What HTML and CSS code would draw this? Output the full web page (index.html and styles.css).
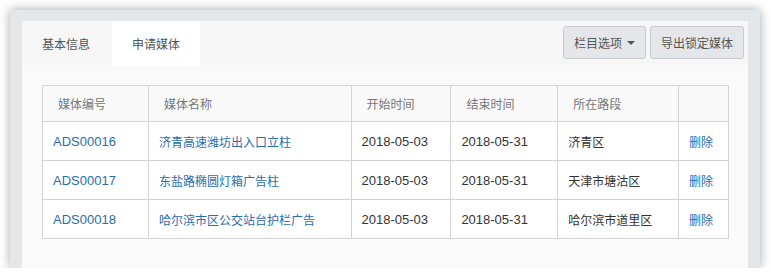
FILE: index.html
```html
<!DOCTYPE html>
<html lang="zh">
<head>
<meta charset="utf-8">
<link rel="stylesheet" href="styles.css">
</head>
<body>
<div class="frame">
  <div class="panel">
    <div class="panel-head">
      <div class="tabs">
        <div class="tab">基本信息</div>
        <div class="tab active">申请媒体</div>
      </div>
      <div class="actions">
        <button class="btn">栏目选项 <span class="caret"></span></button>
        <button class="btn">导出锁定媒体</button>
      </div>
    </div>
    <div class="panel-body">
      <table class="grid">
        <colgroup>
          <col class="c1"><col class="c2"><col class="c3"><col class="c4"><col class="c5"><col class="c6">
        </colgroup>
        <thead>
          <tr><th>媒体编号</th><th>媒体名称</th><th>开始时间</th><th>结束时间</th><th>所在路段</th><th></th></tr>
        </thead>
        <tbody>
          <tr><td class="num link">ADS00016</td><td class="link">济青高速潍坊出入口立柱</td><td class="num">2018-05-03</td><td class="num">2018-05-31</td><td>济青区</td><td class="link">删除</td></tr>
          <tr><td class="num link">ADS00017</td><td class="link">东盐路椭圆灯箱广告柱</td><td class="num">2018-05-03</td><td class="num">2018-05-31</td><td>天津市塘沽区</td><td class="link">删除</td></tr>
          <tr><td class="num link">ADS00018</td><td class="link">哈尔滨市区公交站台护栏广告</td><td class="num">2018-05-03</td><td class="num">2018-05-31</td><td>哈尔滨市道里区</td><td class="link">删除</td></tr>
        </tbody>
      </table>
    </div>
  </div>
</div>
</body>
</html>
```

FILE: styles.css
```css
html, body {
  margin: 0;
  padding: 0;
  background: #ffffff;
}
body {
  font-family: "Liberation Sans", "Noto Sans CJK SC", sans-serif;
  font-size: 12px;
  color: #333;
}
.frame {
  margin: 10px 0 0 10px;
  width: 750px;
  height: 258px;
  box-sizing: border-box;
  padding: 11px 12px 0 12px;
  background: #e4e7ea;
  box-shadow: 0 0 10px rgba(0, 0, 0, 0.35);
  overflow: hidden;
}
.panel {
  height: 100%;
  background: #fafafa;
  display: flex;
  flex-direction: column;
}
.panel-head {
  height: 44px;
  background: #f6f6f6;
  display: flex;
  justify-content: space-between;
  align-items: stretch;
}
.tabs {
  display: flex;
}
.tab {
  display: flex;
  align-items: center;
  padding: 0 20px;
  margin-right: 2px;
  color: #555;
  font-size: 12px;
}
.tab.active {
  background: #ffffff;
  margin-right: 0;
}
.actions {
  display: flex;
  align-items: flex-start;
  gap: 4px;
  padding: 5px 4px 0 0;
}
.btn {
  height: 33px;
  padding: 0 10px;
  font-family: inherit;
  font-size: 12px;
  color: #555;
  background: #e4e6e9;
  border: 1px solid #c9cbce;
  border-radius: 3px;
  display: flex;
  align-items: center;
  gap: 3px;
}
.caret {
  display: inline-block;
  width: 0;
  height: 0;
  border-left: 4px solid transparent;
  border-right: 4px solid transparent;
  border-top: 4px solid #555;
  margin-left: 2px;
}
.panel-body {
  padding: 20px;
}
.grid {
  border-collapse: collapse;
  width: 687px;
  background: #ffffff;
}
.c1 { width: 106px; }
.c2 { width: 203px; }
.c3 { width: 100px; }
.c4 { width: 107px; }
.c5 { width: 121px; }
.c6 { width: 50px; }
.grid th, .grid td {
  border: 1px solid #d4d4d4;
  text-align: left;
  vertical-align: middle;
}
.grid th {
  height: 35px;
  padding: 0 15px;
  background: #f9f9f9;
  color: #777;
  font-weight: normal;
  font-size: 12px;
}
.grid td {
  height: 38px;
  padding: 0 10px;
  font-size: 12px;
  color: #333;
}
.grid td.num {
  font-size: 13px;
}
.grid td.link {
  color: #2a6cb0;
}
```
